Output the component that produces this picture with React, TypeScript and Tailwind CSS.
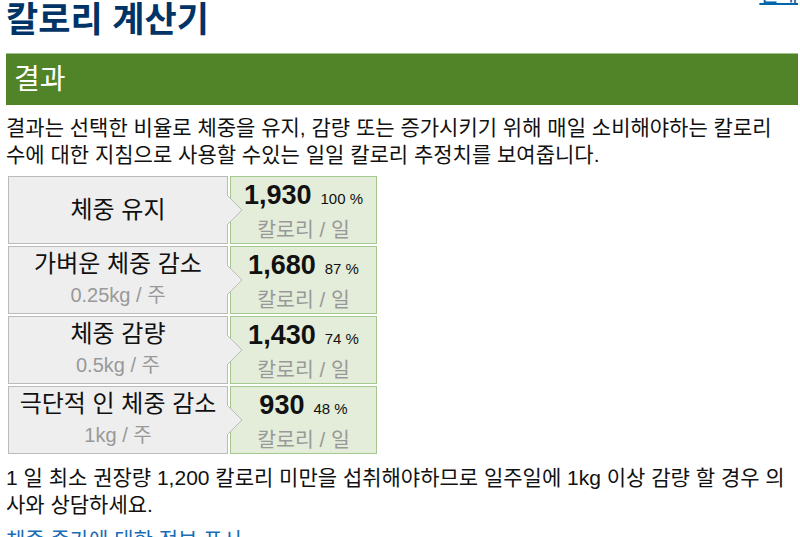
import React from 'react';

type Row = { label: string; sub?: string; cal: string; pct: string };

const rows: Row[] = [
  { label: '체중 유지', cal: '1,930', pct: '100 %' },
  { label: '가벼운 체중 감소', sub: '0.25kg / 주', cal: '1,680', pct: '87 %' },
  { label: '체중 감량', sub: '0.5kg / 주', cal: '1,430', pct: '74 %' },
  { label: '극단적 인 체중 감소', sub: '1kg / 주', cal: '930', pct: '48 %' },
];

function Arrow() {
  return (
    <svg
      width="16"
      height="32"
      viewBox="0 0 16 32"
      className="absolute right-[-16px] top-1/2 -mt-[16px] z-10"
    >
      <polygon points="0,1 15,16 0,31" fill="#eeeeee" />
      <polyline points="0,1 15,16 0,31" fill="none" stroke="#bbbbbb" strokeWidth="1" />
    </svg>
  );
}

export default function App() {
  return (
    <div className="min-h-[537px] bg-white pl-[6px] pr-[2px] text-[#111] font-['Liberation_Sans','Noto_Sans_CJK_KR',sans-serif] overflow-hidden">
      <div className="flex justify-between items-start pt-[3px]">
        <h1 className="text-[35px] leading-[34px] font-bold text-[#003366]">칼로리 계산기</h1>
        <a href="#" className="-mt-[21px] text-[21px] leading-[24px] text-[#0066aa] underline">
          인쇄
        </a>
      </div>

      <div className="mt-[16px] h-[52px] bg-[#518329] border-t border-[#a3bf8c] flex items-center pl-[8px]">
        <h2 className="text-[28px] text-white">결과</h2>
      </div>

      <p className="mt-[9px] mr-[5px] text-[21px] leading-[27px]">
        결과는 선택한 비율로 체중을 유지, 감량 또는 증가시키기 위해 매일 소비해야하는 칼로리 수에 대한 지침으로 사용할 수있는 일일 칼로리 추정치를 보여줍니다.
      </p>

      <div className="mt-[8px] ml-[2px] grid grid-cols-[220px_147px] gap-x-[2px] gap-y-[2px]">
        {rows.map((r) => (
          <React.Fragment key={r.label}>
            <div className="relative h-[68px] bg-[#eeeeee] border border-[#bbbbbb] flex flex-col items-center justify-center">
              <div className="text-[24px] leading-[30px]">{r.label}</div>
              {r.sub && <div className="text-[20px] leading-[32px] text-[#999999]">{r.sub}</div>}
              <Arrow />
            </div>
            <div className="h-[68px] bg-[#e3edd9] border border-[#a5c98c] flex flex-col items-center justify-center">
              <div className="leading-[34px]">
                <span className="text-[27px] font-bold">{r.cal}</span>
                <span className="ml-[9px] text-[15px]">{r.pct}</span>
              </div>
              <div className="text-[20.5px] leading-[27px] text-[#999999]">칼로리 / 일</div>
            </div>
          </React.Fragment>
        ))}
      </div>

      <p className="mt-[10px] mr-[5px] text-[21px] leading-[27px]">
        1 일 최소 권장량 1,200 칼로리 미만을 섭취해야하므로 일주일에 1kg 이상 감량 할 경우 의사와 상담하세요.
      </p>

      <a href="#" className="block mt-[8px] text-[21px] leading-[27px] text-[#1a6cb5]">
        체중 증가에 대한 정보 표시
      </a>
    </div>
  );
}
